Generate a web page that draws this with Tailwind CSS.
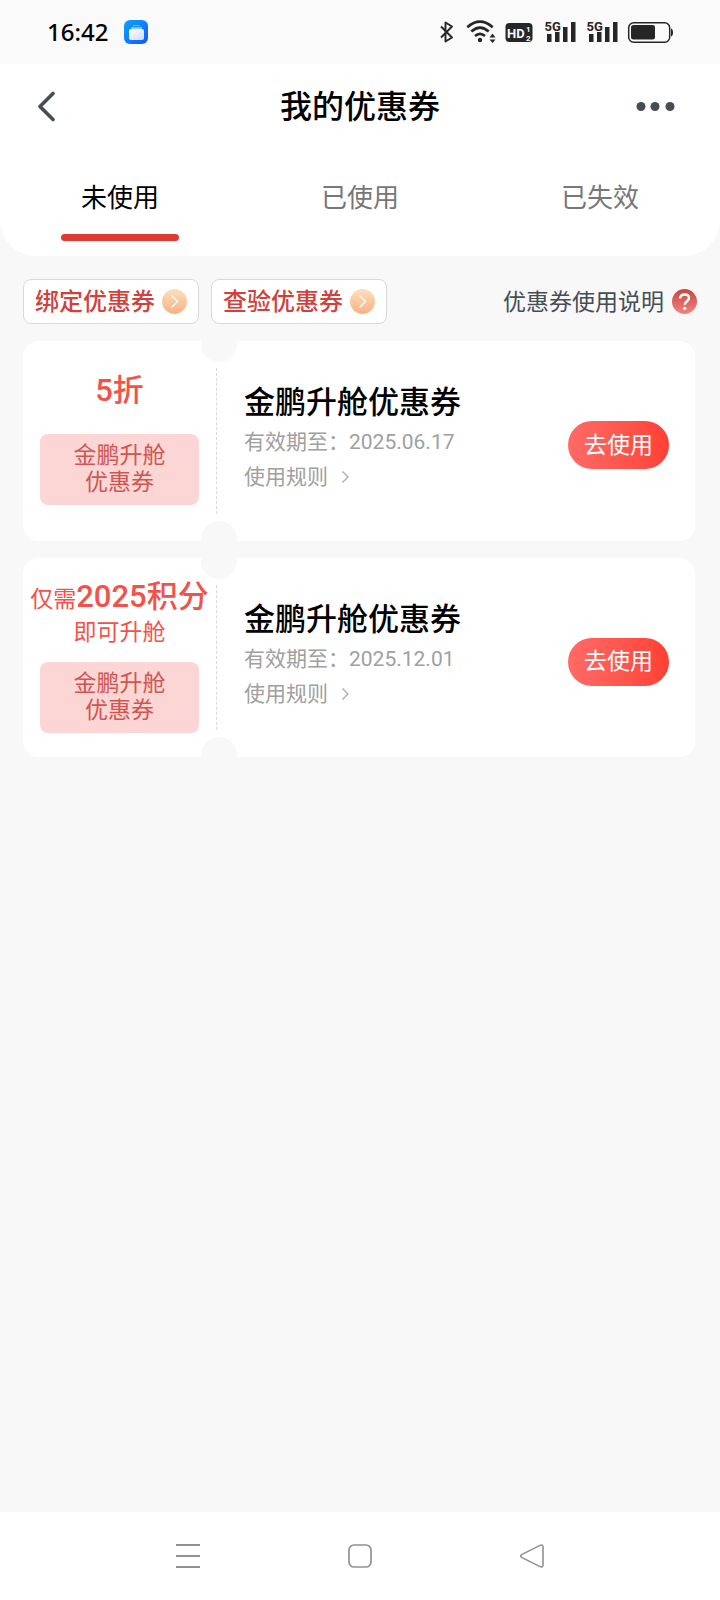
<!DOCTYPE html>
<html lang="zh-CN">
<head>
<meta charset="utf-8">
<meta name="viewport" content="width=device-width, initial-scale=1">
<title>我的优惠券</title>
<script src="https://cdn.jsdelivr.net/npm/@tailwindcss/browser@4"></script>
</head>
<body class="flex min-h-screen flex-col bg-[#f8f8f8] font-['Roboto','Noto_Sans_CJK_SC',sans-serif] text-black">

<!-- System status bar -->
<div class="flex h-16 items-center justify-between bg-[#fafafa] px-[47px]">
  <div class="flex items-center gap-4">
    <span class="font-['Noto_Sans',sans-serif] text-[24px] leading-8 font-medium">16:42</span>
    <svg class="size-6" viewBox="0 0 24 24" aria-hidden="true">
      <defs>
        <linearGradient id="app" x1="0" y1="0" x2="1" y2="1"><stop offset="0" stop-color="#0ba6fc"/><stop offset="1" stop-color="#1257fb"/></linearGradient>
        <linearGradient id="folder" x1="0" y1="0" x2="1" y2="1"><stop offset="0" stop-color="#fff"/><stop offset="1" stop-color="#c9dcfd"/></linearGradient>
      </defs>
      <rect width="24" height="24" rx="6" fill="url(#app)"/>
      <rect x="9" y="5" width="7" height="1" rx=".5" fill="#6fb8fd"/>
      <path d="M8 7h9a1 1 0 0 1 1 1v2H7V8a1 1 0 0 1 1-1z" fill="#8cc6fe"/>
      <rect x="5" y="9" width="15" height="11" rx="2" fill="url(#folder)"/>
    </svg>
  </div>
  <svg class="h-8 w-[234px]" viewBox="439 16 234 32" fill="#262626" aria-hidden="true">
    <path d="M441 26.500L452 37.500L445.500 41.500V22.500L452 26.500L441 37.500" fill="none" stroke="#262626" stroke-width="1.900" stroke-linejoin="round"/>
    <g fill="none" stroke="#262626" stroke-width="2.700">
      <path d="M467.300 27.200Q480 16.200 492.700 27.200"/>
      <path d="M471.300 31.600Q480 23.600 488.700 31.600"/>
      <path d="M475 36Q480 31.600 485 36"/>
    </g>
    <circle cx="480" cy="40" r="2.200"/>
    <path d="M489.500 37.500L492.500 33.500L495.500 37.500zM489.500 39.500H495.500L492.500 43z"/>
    <rect x="505.500" y="23" width="27" height="19" rx="4"/>
    <text x="507" y="37.500" font-family="Roboto" font-size="13" font-weight="700" fill="#fafafa">HD</text>
    <text x="526" y="31.500" font-family="Roboto" font-size="8" font-weight="700" fill="#fafafa">1</text>
    <text x="526" y="40.500" font-family="Roboto" font-size="8" font-weight="700" fill="#fafafa">2</text>
    <text x="544.500" y="30.500" font-family="Roboto" font-size="13" font-weight="700">5G</text>
    <path d="M547 34h4.500v8H547zM555 32h4.500v10H555zM563 27h4.500v15H563zM571 22h4.500v20H571z"/>
    <text x="586.500" y="30.500" font-family="Roboto" font-size="13" font-weight="700">5G</text>
    <path d="M589 34h4.500v8H589zM597 32h4.500v10H597zM605 27h4.500v15H605zM613 22h4.500v20H613z"/>
    <rect x="628.700" y="22.700" width="41" height="19.500" rx="5" fill="none" stroke="#262626" stroke-width="1.500"/>
    <rect x="631" y="25" width="24" height="14.500" rx="2.500"/>
    <path d="M671 28.500q2 .5 2 4t-2 4z"/>
  </svg>
</div>

<!-- Title and tabs -->
<header class="rounded-b-[36px] bg-white">
  <div class="flex h-[84px] items-center justify-between px-8">
    <button type="button" aria-label="返回" class="flex h-12 w-16 items-center">
      <svg class="size-8" viewBox="0 0 32 32" fill="none" stroke="#454d55" stroke-width="3.600" stroke-linecap="round" stroke-linejoin="round"><path d="M21 3.500L8 16.500L21 29.500"/></svg>
    </button>
    <h1 class="pt-0.5 text-[32px] leading-10 font-medium">我的优惠券</h1>
    <button type="button" aria-label="更多" class="flex h-12 w-16 items-center">
      <svg class="h-3 w-14" viewBox="0 0 56 12" fill="#454d55"><circle cx="17" cy="6.500" r="4.500"/><circle cx="31" cy="6.500" r="4.500"/><circle cx="46" cy="6.500" r="4.500"/></svg>
    </button>
  </div>
  <div role="tablist" class="grid grid-cols-3 pt-[30px] pb-[15px] text-[26px] leading-10 text-[#777]">
    <button type="button" role="tab" aria-selected="true" class="flex flex-col items-center gap-4 text-black">
      未使用<span class="h-[7px] w-[118px] rounded-full bg-[#e03a35]"></span>
    </button>
    <button type="button" role="tab" aria-selected="false" class="flex flex-col items-center">已使用</button>
    <button type="button" role="tab" aria-selected="false" class="flex flex-col items-center">已失效</button>
  </div>
</header>

<main class="flex-1 px-[23px] pt-[23px]">
  <svg class="absolute size-0" aria-hidden="true">
    <defs>
      <linearGradient id="peach" x1="0" y1="0" x2="0" y2="1"><stop offset="0" stop-color="#fce0bd"/><stop offset="1" stop-color="#f7b183"/></linearGradient>
      <linearGradient id="help" x1="0" y1="0" x2="0" y2="1"><stop offset="0" stop-color="#c9453f"/><stop offset="1" stop-color="#f08580"/></linearGradient>
    </defs>
  </svg>

  <div class="flex items-center justify-between">
    <div class="flex gap-3 text-[24px] leading-8 font-medium text-[#d2403c]">
      <button type="button" class="flex h-[45px] items-center gap-[7px] rounded-lg border border-[#d9d9d9] bg-white px-[11px]">
        绑定优惠券
        <svg class="size-[25px]" viewBox="0 0 25 25"><circle cx="12.500" cy="12.500" r="12.500" fill="url(#peach)"/><path d="M9.500 6.500l6 6-6 6" fill="none" stroke="#fff" stroke-width="1.300"/></svg>
      </button>
      <button type="button" class="flex h-[45px] items-center gap-[7px] rounded-lg border border-[#d9d9d9] bg-white px-[11px]">
        查验优惠券
        <svg class="size-[25px]" viewBox="0 0 25 25"><circle cx="12.500" cy="12.500" r="12.500" fill="url(#peach)"/><path d="M9.500 6.500l6 6-6 6" fill="none" stroke="#fff" stroke-width="1.300"/></svg>
      </button>
    </div>
    <a href="#" class="flex items-center gap-2 text-[23px] leading-8 text-[#454d55]">
      <span class="pt-0.5">优惠券使用说明</span>
      <svg class="size-[25px]" viewBox="0 0 25 25" fill="none"><circle cx="12.500" cy="12.500" r="12.500" fill="url(#help)"/><path d="M8 9.300c.3-2.500 2-3.800 4.600-3.800 2.700 0 4.400 1.500 4.400 3.600 0 3.200-4.200 3.200-4.200 6.600" stroke="#fff" stroke-width="2.500"/><circle cx="12.700" cy="19.300" r="1.600" fill="#fff"/></svg>
    </a>
  </div>

  <ul class="mt-[17px] mr-[2px] flex flex-col gap-[17px]">
    <li class="relative flex h-[200px] rounded-2xl bg-white">
      <span class="absolute -top-[15px] left-[178px] size-9 rounded-full bg-[#f8f8f8]"></span>
      <span class="absolute -bottom-4 left-[178px] size-9 rounded-full bg-[#f8f8f8]"></span>
      <div class="flex w-[193px] flex-col items-center justify-between pt-[30px] pb-9">
        <p class="text-[31px] leading-10 font-medium text-[#f3524a]">5折</p>
        <p class="w-[159px] rounded-lg bg-[#fcd5d5] pt-2 pb-[9px] text-center text-[23px] leading-[27px] text-[#d05550]">金鹏升舱<br>优惠券</p>
      </div>
      <div class="my-[27px] border-l border-dashed border-[#d9d9d9]"></div>
      <div class="flex flex-1 flex-col pt-[42px] pl-[27px]">
        <h2 class="text-[31px] leading-10 font-medium">金鹏升舱优惠券</h2>
        <p class="text-[21px] leading-[38px] text-[#a0a0a0]">有效期至：2025.06.17</p>
        <button type="button" class="flex items-center gap-3 self-start text-[21px] leading-8 text-[#a0a0a0]">使用规则
          <svg class="h-3 w-3" viewBox="0 0 12 12" fill="none" stroke="#a3aaad" stroke-width="1.300"><path d="M2.500 .5L8 6L2.500 11.500"/></svg>
        </button>
      </div>
      <button type="button" class="mt-2 mr-[26px] h-12 w-[101px] self-center rounded-full bg-linear-to-r from-[#ff6a66] to-[#ff4034] pt-0.5 text-[23px] text-white">去使用</button>
    </li>
    <li class="relative flex h-[199px] rounded-2xl bg-white">
      <span class="absolute -top-[15px] left-[178px] size-9 rounded-full bg-[#f8f8f8]"></span>
      <span class="absolute -bottom-4 left-[178px] size-9 rounded-full bg-[#f8f8f8]"></span>
      <div class="flex w-[193px] flex-col items-center justify-between pt-5 pb-6 text-[#f3524a]">
        <div class="text-center text-[23px] leading-7 whitespace-nowrap">
          <p class="leading-[38px]">仅需<b class="text-[31px] font-medium">2025积分</b></p>
          <p>即可升舱</p>
        </div>
        <p class="w-[159px] rounded-lg bg-[#fcd5d5] pt-2 pb-[9px] text-center text-[23px] leading-[27px] text-[#d05550]">金鹏升舱<br>优惠券</p>
      </div>
      <div class="my-[27px] border-l border-dashed border-[#d9d9d9]"></div>
      <div class="flex flex-1 flex-col pt-[42px] pl-[27px]">
        <h2 class="text-[31px] leading-10 font-medium">金鹏升舱优惠券</h2>
        <p class="text-[21px] leading-[38px] text-[#a0a0a0]">有效期至：2025.12.01</p>
        <button type="button" class="flex items-center gap-3 self-start text-[21px] leading-8 text-[#a0a0a0]">使用规则
          <svg class="h-3 w-3" viewBox="0 0 12 12" fill="none" stroke="#a3aaad" stroke-width="1.300"><path d="M2.500 .5L8 6L2.500 11.500"/></svg>
        </button>
      </div>
      <button type="button" class="mt-2 mr-[26px] h-12 w-[101px] self-center rounded-full bg-linear-to-r from-[#ff6a66] to-[#ff4034] pt-0.5 text-[23px] text-white">去使用</button>
    </li>
  </ul>
</main>

<!-- System navigation bar -->
<nav class="flex h-[88px] items-center justify-center gap-[148px] bg-white">
  <button type="button" aria-label="菜单"><svg class="size-6" viewBox="0 0 24 24" stroke="#919191" stroke-width="1.800"><path d="M0 1h24M0 12h24M0 23h24"/></svg></button>
  <button type="button" aria-label="主页"><svg class="size-6" viewBox="0 0 24 24" fill="none" stroke="#919191" stroke-width="1.700"><rect x="1" y="1" width="22" height="22" rx="5"/></svg></button>
  <button type="button" aria-label="后退"><svg class="size-6" viewBox="0 0 24 24" fill="none" stroke="#919191" stroke-width="1.600"><path d="M1.600 10.600L20 1.400Q23 .2 23 3V21Q23 23.800 20 22.600L1.600 13.400Q-.2 12 1.600 10.600z"/></svg></button>
</nav>
</body>
</html>
